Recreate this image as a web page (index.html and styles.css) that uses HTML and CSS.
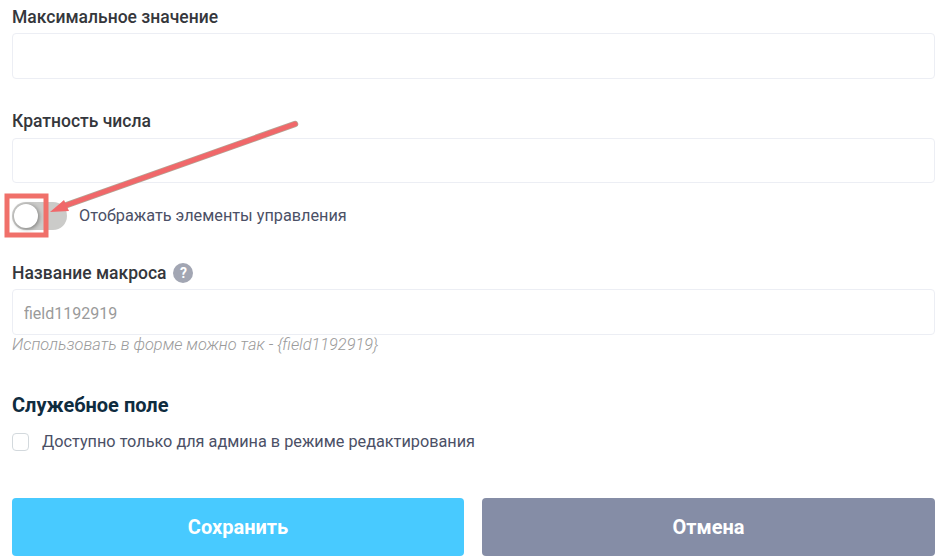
FILE: index.html
```html
<!DOCTYPE html>
<html lang="ru">
<head>
    <meta charset="UTF-8">
    <meta name="viewport" content="width=device-width, initial-scale=1.0">
    <title>Настройки поля</title>
    <link rel="stylesheet" href="styles.css">
</head>
<body>
    <form class="field-form">
        <div class="group group-max">
            <label class="field-label">Максимальное значение</label>
            <input class="field-input" type="text">
        </div>

        <div class="group group-step">
            <label class="field-label">Кратность числа</label>
            <input class="field-input" type="text">
        </div>

        <div class="toggle-row">
            <span class="toggle"><span class="toggle-knob"></span></span>
            <span class="toggle-text">Отображать элементы управления</span>
        </div>

        <div class="group group-macro">
            <label class="field-label">Название макроса <span class="help">?</span></label>
            <input class="field-input macro-input" type="text" value="field1192919">
            <div class="hint">Использовать в форме можно так - {field1192919}</div>
        </div>

        <h3 class="section-title">Служебное поле</h3>
        <div class="check-row">
            <span class="checkbox"></span>
            <span class="check-text">Доступно только для админа в режиме редактирования</span>
        </div>

        <div class="actions">
            <button type="button" class="btn btn-save">Сохранить</button>
            <button type="button" class="btn btn-cancel">Отмена</button>
        </div>
    </form>

    <!-- Пометка поверх скриншота -->
    <svg class="annotation" width="943" height="559" viewBox="0 0 943 559">
        <rect x="7" y="196" width="39" height="39" fill="none" stroke="#f0706a" stroke-width="5"/>
        <path d="M295 124 L64 206" fill="none" stroke="#b5a596" stroke-width="6.5" stroke-linecap="round"/>
        <path d="M295 124 L64 206" fill="none" stroke="#f0686a" stroke-width="5" stroke-linecap="round"/>
        <path d="M50 212 L64 200 L69 211 Z" fill="#f0686a"/>
    </svg>
</body>
</html>
```

FILE: styles.css
```css
body {
    margin: 0;
    font-family: Roboto, Arial, sans-serif;
    background-color: #fff;
    overflow: hidden;
}
.field-form {
    padding: 6px 8px 0 12px;
}
.group-step {
    margin-top: 31px;
}
.group-step .field-label {
    margin-bottom: 6px;
}
.group-macro {
    margin-top: 32px;
}
.field-label {
    display: flex;
    align-items: center;
    gap: 6px;
    height: 22px;
    margin-bottom: 5px;
    font-size: 17.5px;
    font-weight: 500;
    line-height: 22px;
    color: #35373c;
}
.help {
    width: 20px;
    height: 20px;
    margin-left: 1px;
    border-radius: 50%;
    background-color: #a2a6b3;
    color: #fff;
    font-size: 14px;
    font-weight: 700;
    line-height: 20px;
    text-align: center;
}
.field-input {
    display: block;
    width: 100%;
    height: 46px;
    padding: 0 11px;
    border: 1px solid #eceef4;
    border-radius: 4px;
    box-sizing: border-box;
    background-color: #fff;
    font-family: Roboto, Arial, sans-serif;
    font-size: 16px;
    color: #9a9a9a;
}
.macro-input {
    padding-top: 2px;
}
.group-step .field-input {
    height: 45px;
}
.hint {
    font-size: 16.35px;
    font-style: italic;
    font-weight: 300;
    line-height: 20px;
    color: #9a9a9a;
}
.toggle-row {
    display: flex;
    align-items: center;
    margin-top: 19px;
    height: 28px;
}
.toggle {
    display: block;
    position: relative;
    width: 55px;
    height: 28px;
    border-radius: 14px;
    background-color: #cbcbc9;
}
.toggle-knob {
    position: absolute;
    left: 2px;
    top: 2px;
    width: 24px;
    height: 24px;
    border-radius: 50%;
    background-color: #fff;
    box-shadow: 1px 1px 4px rgba(0, 0, 0, 0.4);
}
.toggle-text {
    margin-left: 12px;
    padding-bottom: 2px;
    font-size: 16.25px;
    color: #4b5066;
}
.section-title {
    margin: 37px 0 0;
    font-size: 20px;
    font-weight: 700;
    line-height: 26px;
    color: #0f2c3f;
}
.check-row {
    display: flex;
    align-items: center;
    margin-top: 13px;
}
.checkbox {
    width: 17px;
    height: 18px;
    border: 1px solid #d3d9dd;
    border-radius: 4px;
    box-sizing: border-box;
}
.check-text {
    margin-left: 13px;
    font-size: 16.25px;
    line-height: 22px;
    color: #4b5066;
}
.actions {
    display: grid;
    grid-template-columns: 452px 1fr;
    gap: 18px;
    margin-top: 45px;
}
.btn {
    height: 58px;
    border: none;
    border-radius: 4px;
    color: #fff;
    font-family: Roboto, Arial, sans-serif;
    font-size: 20px;
    font-weight: 700;
    cursor: pointer;
}
.btn-save {
    background-color: #48caff;
}
.btn-cancel {
    background-color: #858da6;
}
.annotation {
    position: absolute;
    left: 0;
    top: 0;
    pointer-events: none;
}
```
